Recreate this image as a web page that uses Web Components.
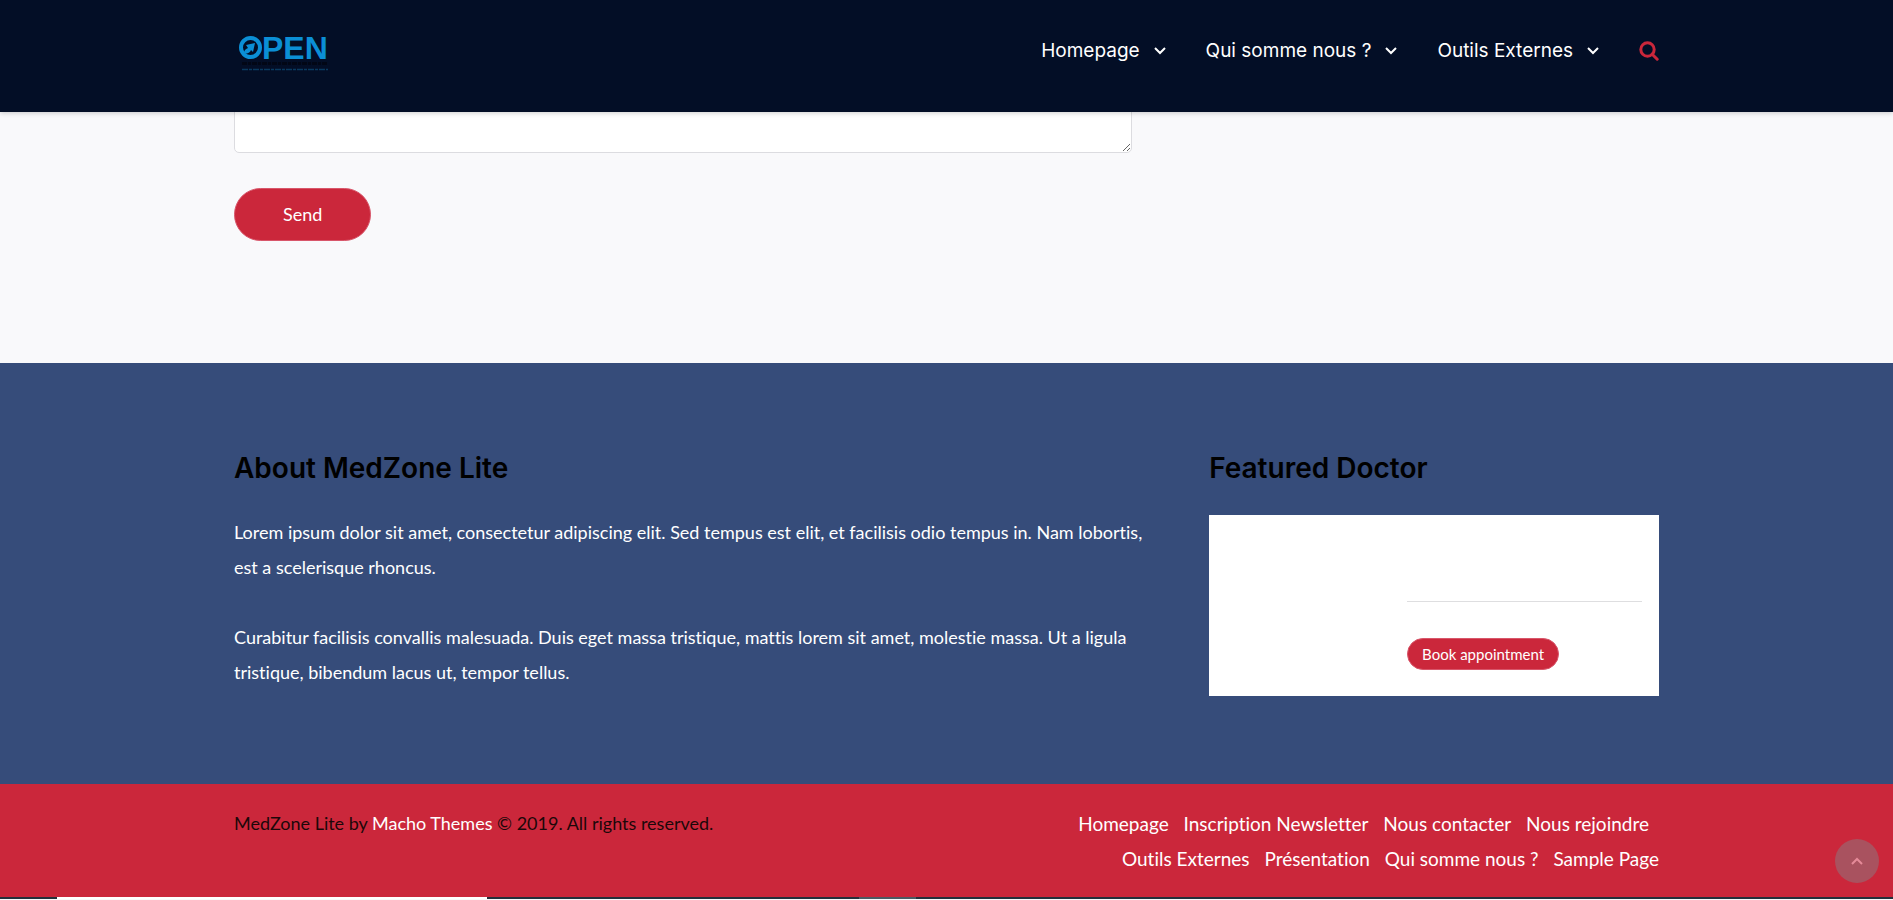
<!DOCTYPE html>
<html lang="fr">
<head>
<meta charset="utf-8">
<meta name="viewport" content="width=device-width, initial-scale=1">
<title>Open</title>
<style>
  html { background: #f9f9fb; }
  body {
    margin: 0;
    font: 18px/35px Lato, "Open Sans", sans-serif;
    font-variant-ligatures: none;
    color: #fff;
    --navy: #030e26;
    --blue: #364c7a;
    --red: #cb273b;
    --display: Inter, "Open Sans", sans-serif;
    --page: 1425px;
  }
</style>
</head>
<body>
<site-header>
  <nav-item>Homepage</nav-item>
  <nav-item>Qui somme nous ?</nav-item>
  <nav-item>Outils Externes</nav-item>
</site-header>
<contact-form></contact-form>
<site-widgets>
  <footer-widget heading="About MedZone Lite">
    <p>Lorem ipsum dolor sit amet, consectetur adipiscing elit. Sed tempus est elit, et facilisis odio tempus in. Nam lobortis, est a scelerisque rhoncus.</p>
    <p>Curabitur facilisis convallis malesuada. Duis eget massa tristique, mattis lorem sit amet, molestie massa. Ut a ligula tristique, bibendum lacus ut, tempor tellus.</p>
  </footer-widget>
  <footer-widget heading="Featured Doctor"><doctor-card></doctor-card></footer-widget>
</site-widgets>
<site-footer></site-footer>
<task-strip></task-strip>
<back-to-top></back-to-top>

<script>
const define = (name, html, setup) => {
  const template = document.createElement('template');
  template.innerHTML = html;
  customElements.define(name, class extends HTMLElement {
    constructor() {
      super();
      this.attachShadow({ mode: 'open' }).append(template.content.cloneNode(true));
    }
    connectedCallback() { if (setup) setup(this, this.shadowRoot); }
  });
};

define('site-logo', `
<style>
  :host { display: block; }
  a { display: block; }
  svg { display: block; }
  text { font: bold 32px "Liberation Sans", Arial, sans-serif; fill: #0b8fd6; }
</style>
<a href="#" aria-label="Open">
  <svg width="100" height="52" viewBox="0 0 100 52">
    <circle cx="16.500" cy="22.500" r="9.500" fill="none" stroke="#0b8fd6" stroke-width="4"/>
    <path d="M10 28c0-3 2-4 4-5l-2-3 9-2-2 9-2-2c-1 3-4 4-7 3z" fill="#0b8fd6"/>
    <text x="28" y="34">PEN</text>
    <path d="M8 38.500H94" stroke="#020716" stroke-width="3" stroke-dasharray="5 1 3 1"/>
    <path d="M8 44.500H94" stroke="#0a3a5f" stroke-width="1.500" stroke-dasharray="6 1 3 1"/>
  </svg>
</a>`);

define('nav-item', `
<style>
  :host { display: block; }
  a { display: flex; align-items: center; gap: 14px; color: #fff; text-decoration: none;
      font: 19px/30px var(--display); white-space: nowrap; }
</style>
<a href="#"><slot></slot><svg width="12" height="8" viewBox="0 0 12 8" fill="none" stroke="#fff" stroke-width="2"><path d="M1 1l5 5 5-5"/></svg></a>`);

define('site-header', `
<style>
  :host { display: block; position: sticky; top: 0; z-index: 2; background: var(--navy);
          box-shadow: 0 1px 5px rgba(0,0,0,.2); }
  header { max-width: var(--page); margin: 0 auto; height: 112px; box-sizing: border-box; padding: 25px 0;
           display: flex; justify-content: space-between; align-items: flex-start; }
  nav { display: flex; gap: 40px; padding-top: 11px; align-items: center; }
  button { border: 0; padding: 0; background: none; cursor: pointer; }
  button svg { display: block; }
</style>
<header>
  <site-logo></site-logo>
  <nav><slot></slot>
    <button aria-label="Search"><svg width="20" height="20" viewBox="0 0 20 20" fill="none" stroke="#cb273b" stroke-width="3"><circle cx="8.500" cy="8.500" r="6.700"/><path d="M13.200 13.200l5 5" stroke-linecap="round"/></svg></button>
  </nav>
</header>`);

define('contact-form', `
<style>
  :host { display: block; margin-top: -59px; padding-bottom: 122px; }
  form { max-width: var(--page); margin: 0 auto; }
  textarea { display: block; width: 63%; height: 100px; box-sizing: border-box; border: 1px solid #dcdce0;
             border-radius: 5px; background: #fff; font: inherit; color: #333; resize: both; }
  button { margin-top: 35px; padding: 8px 48px; border: 1px solid #d8566a; border-radius: 27px;
           background: var(--red); color: #fff; font: inherit; display: block; }
</style>
<form>
  <textarea aria-label="Message"></textarea>
  <button type="button">Send</button>
</form>`);

define('site-widgets', `
<style>
  :host { display: block; background: var(--blue); padding: 87px 0 88px; }
  div { max-width: var(--page); margin: 0 auto; display: grid; grid-template-columns: 25fr 12fr; gap: 38px; }
</style>
<div><slot></slot></div>`);

define('footer-widget', `
<style>
  h2 { margin: 0 0 29px; font: 600 28px/36px var(--display); color: #000; }
  :host { display: block; }
  ::slotted(p) { margin: 0 15px 35px 0; }
  ::slotted(p:last-child) { margin-bottom: 0; }
</style>
<h2></h2><slot></slot>`, (host, root) => {
  root.querySelector('h2').textContent = host.getAttribute('heading');
});

define('doctor-card', `
<style>
  :host { display: block; background: #fff; padding: 86px 17px 26px 44%; }
  hr { margin: 0 0 36px; border: 0; border-top: 1px solid #dedee0; }
  a { display: block; width: fit-content; box-sizing: border-box; padding: 0 14px; border: 1px solid #d8566a;
      border-radius: 16px; background: var(--red); color: #fff; font-size: 15px; line-height: 30px;
      text-decoration: none; white-space: nowrap; }
</style>
<hr><a href="#">Book appointment</a>`);

define('site-footer', `
<style>
  :host { display: block; background: var(--red); padding: 22px 0 21px; }
  footer { max-width: var(--page); margin: 0 auto; display: grid; grid-template-columns: 1fr 1fr; gap: 38px; }
  p, ul { margin: 0; padding: 0; }
  p { color: #1c0709; }
  a { color: #fff; text-decoration: none; }
  ul { text-align: right; list-style: none; font-size: 19px; }
  li { display: inline-block; margin-right: 10px; }
  li:last-child { margin-right: 0; }
</style>
<footer>
  <p>MedZone Lite by <a href="#">Macho Themes</a> © 2019. All rights reserved.</p>
  <ul>
    <li><a href="#">Homepage</a></li>
    <li><a href="#">Inscription Newsletter</a></li>
    <li><a href="#">Nous contacter</a></li>
    <li><a href="#">Nous rejoindre</a></li>
    <li><a href="#">Outils Externes</a></li>
    <li><a href="#">Présentation</a></li>
    <li><a href="#">Qui somme nous ?</a></li>
    <li><a href="#">Sample Page</a></li>
  </ul>
</footer>`);

define('task-strip', `
<style>
  :host { display: block; height: 2px;
    background: linear-gradient(90deg, #252f3a 3%, #fff 3% 25.7%, #252f3a 25.7% 45.4%, #4c5a62 45.4% 48.4%, #252f3a 48.4%); }
</style>`);

define('back-to-top', `
<style>
  :host { position: fixed; right: 14px; bottom: 17px; z-index: 3; }
  button { width: 44px; height: 44px; border: 0; padding: 0; border-radius: 50%; background: #a9525f;
           display: grid; place-items: center; }
</style>
<button aria-label="Back to top"><svg width="12" height="8" viewBox="0 0 12 8" fill="none" stroke="#e58a98" stroke-width="2"><path d="M1 7l5-5 5 5"/></svg></button>`);
</script>
</body>
</html>
